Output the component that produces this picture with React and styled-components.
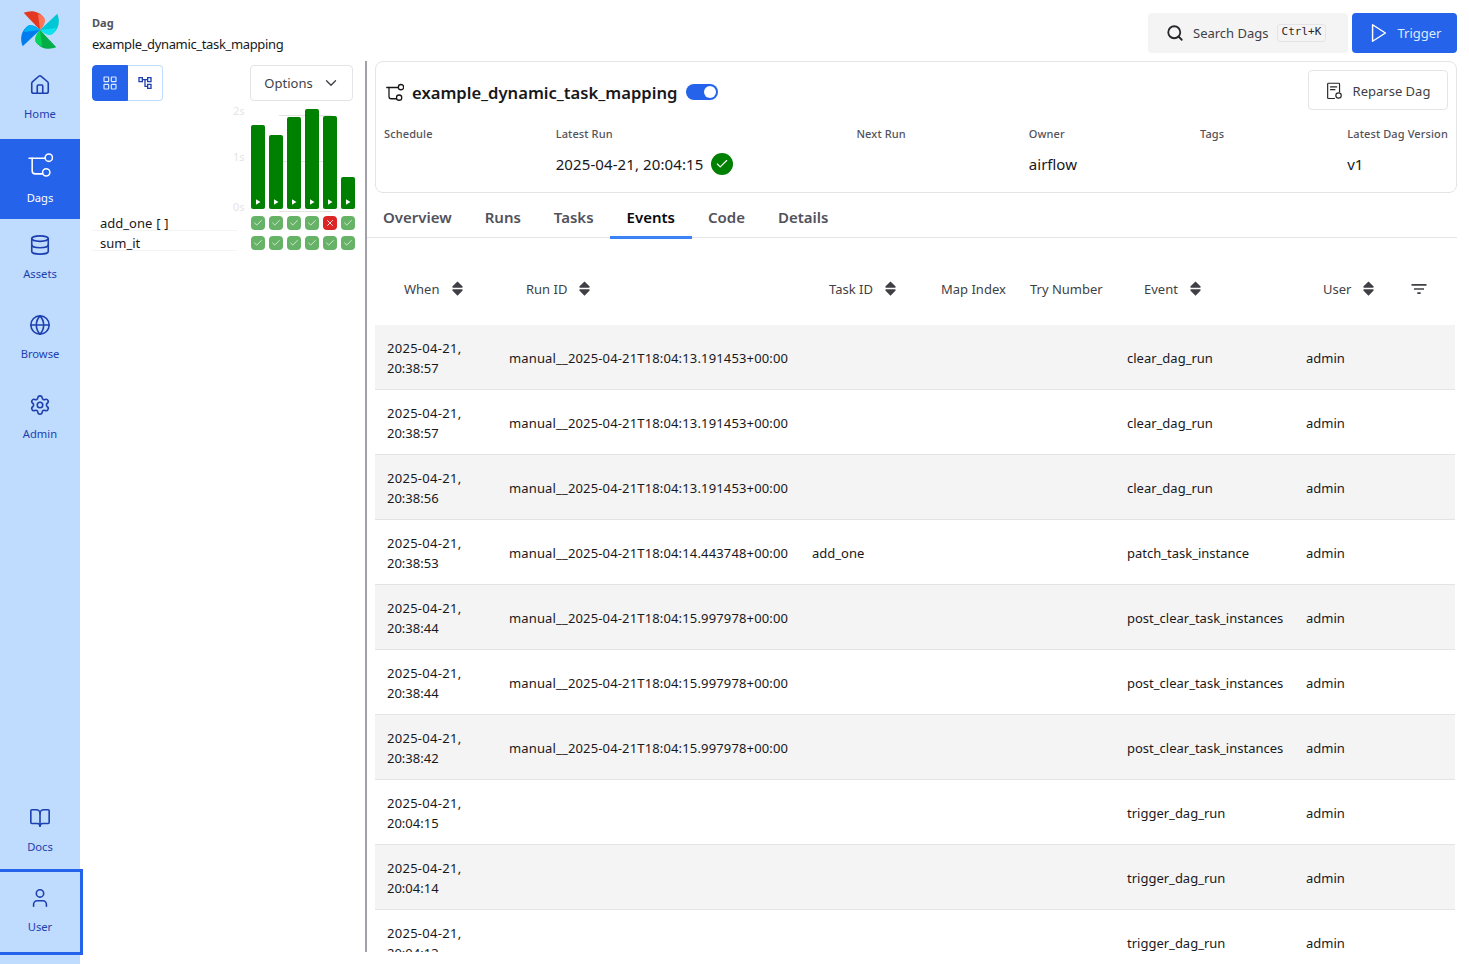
import React from "react";
import styled, { createGlobalStyle } from "styled-components";
import { House, Database, Globe, Settings, BookOpen, User, Check, X, ChevronDown, LayoutGrid, Search } from "lucide-react";
import { FiPlay } from "react-icons/fi";
import { MdOutlineAccountTree, MdFilterList } from "react-icons/md";
import { TiArrowUnsorted } from "react-icons/ti";

const GlobalStyle = createGlobalStyle`
  * { box-sizing: border-box; }
  body {
    margin: 0;
    font-family: "Noto Sans", sans-serif;
    color: #18181b;
    background: #fff;
  }
`;

const barHeights = [84, 74, 92, 100, 93, 32];
const gridRows = [
  { name: "add_one [ ]", states: ["ok", "ok", "ok", "ok", "failed", "ok"] },
  { name: "sum_it", states: ["ok", "ok", "ok", "ok", "ok", "ok"] },
];

const run1 = "manual__2025-04-21T18:04:13.191453+00:00";
const run2 = "manual__2025-04-21T18:04:14.443748+00:00";
const run3 = "manual__2025-04-21T18:04:15.997978+00:00";

const events = [
  ["20:38:57", run1, "", "clear_dag_run"],
  ["20:38:57", run1, "", "clear_dag_run"],
  ["20:38:56", run1, "", "clear_dag_run"],
  ["20:38:53", run2, "add_one", "patch_task_instance"],
  ["20:38:44", run3, "", "post_clear_task_instances"],
  ["20:38:44", run3, "", "post_clear_task_instances"],
  ["20:38:42", run3, "", "post_clear_task_instances"],
  ["20:04:15", "", "", "trigger_dag_run"],
  ["20:04:14", "", "", "trigger_dag_run"],
  ["20:04:13", "", "", "trigger_dag_run"],
];

function Logo() {
  const blade = "M72 72 L23 20 C46 11 70 15 84 36 C88 50 81 62 72 72 Z";
  const petal = "M72 72 L66 24 C76 26 82 30 86 38 C89 50 81 62 72 72 Z";
  const colors = [
    ["#e43921", "#ff7557"],
    ["#00c7d4", "#11e1ee"],
    ["#00ad46", "#04d659"],
    ["#017cee", "#00b1f5"],
  ];
  return (
    <svg width="48" height="48" viewBox="0 0 144 144">
      {colors.map(([dark, light], i) => (
        <g key={dark} transform={`rotate(${i * 90} 72 72)`}>
          <path d={blade} fill={dark} />
          <path d={petal} fill={light} />
        </g>
      ))}
    </svg>
  );
}

function DagIcon({ size = 24, strokeWidth = 2 }) {
  return (
    <svg width={size} height={size} viewBox="0 0 24 24" fill="none" stroke="currentColor" strokeWidth={strokeWidth} strokeLinecap="round">
      <path d="M1 6h15" />
      <path d="M4 6v12a3 3 0 0 0 3 3h7" />
      <circle cx="20" cy="5.5" r="3.5" fill="none" />
      <circle cx="17.5" cy="19.5" r="3.5" fill="none" />
    </svg>
  );
}

function ReparseIcon() {
  return (
    <svg width="17" height="18" viewBox="0 0 18 20" fill="none" stroke="currentColor" strokeWidth="1.3" strokeLinecap="round">
      <path d="M9 18.3H2.2a.8.8 0 0 1-.8-.8V2.2c0-.4.4-.8.8-.8h11.6c.4 0 .8.4.8.8V11" />
      <path d="M4.5 5.5h7M4.5 8.5h5" />
      <circle cx="13.5" cy="15" r="3" />
    </svg>
  );
}

export default function App() {
  return (
    <Page>
      <GlobalStyle />
      <Sidebar>
        <LogoBox>
          <Logo />
        </LogoBox>
        <NavItem><House size={22} strokeWidth={1.75} /><span>Home</span></NavItem>
        <NavItem $active><DagIcon size={25} strokeWidth={1.5} /><span>Dags</span></NavItem>
        <NavItem><Database size={22} strokeWidth={1.75} /><span>Assets</span></NavItem>
        <NavItem><Globe size={22} strokeWidth={1.75} /><span>Browse</span></NavItem>
        <NavItem><Settings size={22} strokeWidth={1.75} /><span>Admin</span></NavItem>
        <Spacer />
        <NavItem><BookOpen size={22} strokeWidth={1.75} /><span>Docs</span></NavItem>
        <NavItem $focused><User size={22} strokeWidth={1.75} /><span>User</span></NavItem>
      </Sidebar>

      <Main>
        <TopBar>
          <Crumbs>
            <CrumbLabel>Dag</CrumbLabel>
            <CrumbValue>example_dynamic_task_mapping</CrumbValue>
          </Crumbs>
          <TopActions>
            <SearchBox>
              <Search size={18} strokeWidth={2.4} />
              <span>Search Dags</span>
              <Kbd>Ctrl+K</Kbd>
            </SearchBox>
            <TriggerButton>
              <FiPlay size={22} strokeWidth={1.6} />
              Trigger
            </TriggerButton>
          </TopActions>
        </TopBar>

        <Panels>
          <LeftPanel>
            <Toolbar>
              <ViewToggle>
                <ViewButton $active><LayoutGrid size={16} strokeWidth={1.8} /></ViewButton>
                <ViewButton><MdOutlineAccountTree size={16} /></ViewButton>
              </ViewToggle>
              <OptionsButton>
                Options
                <ChevronDown size={18} strokeWidth={1.8} />
              </OptionsButton>
            </Toolbar>

            <Chart>
              <GridLine $top={14} />
              <GridLine $top={60} />
              <GridLine $top={110} />
              <AxisLabel $top={2}>2s</AxisLabel>
              <AxisLabel $top={48}>1s</AxisLabel>
              <AxisLabel $top={98}>0s</AxisLabel>
              <Bars>
                {barHeights.map((h, i) => (
                  <Bar key={i} style={{ height: h }}>
                    <PlayMark />
                  </Bar>
                ))}
              </Bars>
            </Chart>

            <GridRows>
              {gridRows.map((row) => (
                <GridRow key={row.name}>
                  <RowName>{row.name}</RowName>
                  <Squares>
                    {row.states.map((s, i) => (
                      <Square key={i} $failed={s === "failed"}>
                        {s === "failed" ? <X size={10} strokeWidth={2} /> : <Check size={10} strokeWidth={2} />}
                      </Square>
                    ))}
                  </Squares>
                </GridRow>
              ))}
            </GridRows>
          </LeftPanel>

          <RightPanel>
            <DagCard>
              <CardHead>
                <CardTitle>
                  <DagIcon size={18} strokeWidth={1.7} />
                  <h1>example_dynamic_task_mapping</h1>
                  <Toggle />
                </CardTitle>
                <ReparseButton>
                  <ReparseIcon />
                  Reparse Dag
                </ReparseButton>
              </CardHead>
              <MetaRow>
                <MetaItem><MetaLabel>Schedule</MetaLabel></MetaItem>
                <MetaItem>
                  <MetaLabel>Latest Run</MetaLabel>
                  <MetaValue>
                    <RunTime>2025-04-21, 20:04:15</RunTime>
                    <StateDot><Check size={14} strokeWidth={2} /></StateDot>
                  </MetaValue>
                </MetaItem>
                <MetaItem><MetaLabel>Next Run</MetaLabel></MetaItem>
                <MetaItem>
                  <MetaLabel>Owner</MetaLabel>
                  <MetaValue>airflow</MetaValue>
                </MetaItem>
                <MetaItem><MetaLabel>Tags</MetaLabel></MetaItem>
                <MetaItem>
                  <MetaLabel>Latest Dag Version</MetaLabel>
                  <MetaValue>v1</MetaValue>
                </MetaItem>
              </MetaRow>
            </DagCard>

            <Tabs>
              {["Overview", "Runs", "Tasks", "Events", "Code", "Details"].map((t) => (
                <Tab key={t} $active={t === "Events"}>{t}</Tab>
              ))}
            </Tabs>

            <Table>
              <HeadRow>
                <HeadCell $sortable>When <TiArrowUnsorted size={19} /></HeadCell>
                <HeadCell $sortable>Run ID <TiArrowUnsorted size={19} /></HeadCell>
                <HeadCell $sortable>Task ID <TiArrowUnsorted size={19} /></HeadCell>
                <HeadCell>Map Index</HeadCell>
                <HeadCell>Try Number</HeadCell>
                <HeadCell $sortable>Event <TiArrowUnsorted size={19} /></HeadCell>
                <HeadCell $sortable>
                  User <TiArrowUnsorted size={19} />
                  <FilterButton><MdFilterList size={20} /></FilterButton>
                </HeadCell>
              </HeadRow>
              {events.map((e, i) => (
                <Row key={i} $striped={i % 2 === 0}>
                  <Cell>
                    <DateLine>2025-04-21,</DateLine>
                    <span>{e[0]}</span>
                  </Cell>
                  <Cell $numeric>{e[1]}</Cell>
                  <Cell>{e[2]}</Cell>
                  <Cell />
                  <Cell />
                  <Cell>{e[3]}</Cell>
                  <Cell>admin</Cell>
                </Row>
              ))}
            </Table>
          </RightPanel>
        </Panels>
      </Main>
    </Page>
  );
}

const Page = styled.div`
  display: flex;
  height: 100vh;
  overflow: hidden;
`;

const Sidebar = styled.nav`
  width: 80px;
  flex-shrink: 0;
  display: flex;
  flex-direction: column;
  padding-bottom: 12px;
  background-color: #bfdbfe;
`;

const LogoBox = styled.div`
  height: 59px;
  padding-top: 6px;
  display: flex;
  justify-content: center;
`;

const NavItem = styled.div`
  position: relative;
  width: 80px;
  height: 80px;
  flex-shrink: 0;
  display: flex;
  flex-direction: column;
  align-items: center;
  gap: ${(p) => (p.$active ? "13px" : "10px")};
  padding-top: ${(p) => (p.$active ? "13px" : "15px")};
  font-size: 11.2px;
  line-height: 16px;
  color: ${(p) => (p.$active ? "#fff" : "#1e40af")};
  background-color: ${(p) => (p.$active ? "#2563eb" : "transparent")};
  outline: ${(p) => (p.$focused ? "3px solid #2563eb" : "none")};
`;

const Spacer = styled.div`
  flex: 1;
`;

const Main = styled.main`
  flex: 1;
  min-width: 0;
  display: flex;
  flex-direction: column;
  padding: 0 12px 12px;
`;

const TopBar = styled.header`
  height: 61px;
  flex-shrink: 0;
  display: flex;
  justify-content: space-between;
  padding-top: 13px;
`;

const Crumbs = styled.div`
  display: flex;
  flex-direction: column;
  gap: 4px;
  padding-top: 2px;
`;

const CrumbLabel = styled.span`
  font-size: 11px;
  line-height: 16px;
  font-weight: 700;
  color: #52525b;
`;

const CrumbValue = styled.span`
  font-size: 13px;
  line-height: 18px;
  letter-spacing: -0.35px;
`;

const TopActions = styled.div`
  display: flex;
  gap: 4px;
  height: 40px;
`;

const SearchBox = styled.div`
  width: 200px;
  display: flex;
  align-items: center;
  padding-left: 18px;
  font-size: 13px;
  color: #3f3f46;
  background-color: #f4f4f5;
  border-radius: 4px;

  svg {
    color: #27272a;
    margin-right: 9px;
  }
`;

const Kbd = styled.kbd`
  margin-left: 8px;
  padding: 0 4px;
  height: 18px;
  font-family: "DejaVu Sans Mono", monospace;
  font-size: 11px;
  line-height: 13px;
  color: #27272a;
  background-color: #f4f4f5;
  border: 1px solid #e4e4e7;
  border-radius: 3px;
`;

const TriggerButton = styled.div`
  width: 105px;
  display: flex;
  align-items: center;
  justify-content: center;
  gap: 8px;
  font-size: 13px;
  color: #dbeafe;
  background-color: #2563eb;
  border-radius: 4px;

  svg {
    color: #fff;
  }
`;

const Panels = styled.div`
  flex: 1;
  min-height: 0;
  display: flex;
`;

const LeftPanel = styled.section`
  width: 273px;
  flex-shrink: 0;
  padding-top: 4px;
`;

const Toolbar = styled.div`
  display: flex;
  justify-content: space-between;
  width: 261px;
  height: 36px;
`;

const ViewToggle = styled.div`
  display: flex;
`;

const ViewButton = styled.div`
  width: ${(p) => (p.$active ? "36px" : "35px")};
  display: flex;
  align-items: center;
  justify-content: center;
  color: ${(p) => (p.$active ? "#dbeafe" : "#1e40af")};
  background-color: ${(p) => (p.$active ? "#2563eb" : "#fff")};
  border: 1px solid ${(p) => (p.$active ? "#2563eb" : "#bfdbfe")};
  border-left-width: ${(p) => (p.$active ? "1px" : "0")};
  border-radius: ${(p) => (p.$active ? "4px 0 0 4px" : "0 4px 4px 0")};
`;

const OptionsButton = styled.div`
  width: 103px;
  display: flex;
  align-items: center;
  justify-content: center;
  gap: 9px;
  padding-left: 1px;
  font-size: 13px;
  color: #3f3f46;
  border: 1px solid #e4e4e7;
  border-radius: 4px;
`;

const Chart = styled.div`
  position: relative;
  height: 108px;
  display: flex;
  justify-content: flex-end;
`;

const GridLine = styled.div`
  position: absolute;
  top: ${(p) => p.$top}px;
  left: 187px;
  width: 53px;
  height: 1px;
  background-color: #e4e4e7;
`;

const AxisLabel = styled.span`
  position: absolute;
  top: ${(p) => p.$top}px;
  left: 141px;
  font-size: 11px;
  line-height: 16px;
  color: #e4e4e7;
`;

const Bars = styled.div`
  position: relative;
  display: flex;
  align-items: flex-end;
  gap: 4px;
  width: 104px;
  margin-right: 10px;
`;

const Bar = styled.div`
  width: 14px;
  display: flex;
  align-items: flex-end;
  justify-content: center;
  padding-bottom: 4px;
  background-color: #008000;
  border-radius: 2px;
`;

const PlayMark = styled.i`
  width: 5px;
  height: 6px;
  background-color: #fff;
  clip-path: polygon(0 0, 100% 50%, 0 100%);
`;

const GridRows = styled.div`
  display: flex;
  flex-direction: column;
  gap: 6px;
  margin-top: 7px;
`;

const GridRow = styled.div`
  display: flex;
  height: 14px;
  gap: 14px;
`;

const RowName = styled.div`
  width: 145px;
  height: 15px;
  padding-left: 8px;
  font-size: 13px;
  line-height: 15px;
  word-spacing: 0.5px;
  border-bottom: 1px solid #f4f4f5;
`;

const Squares = styled.div`
  display: flex;
  gap: 4px;
`;

const Square = styled.div`
  width: 14px;
  height: 14px;
  display: flex;
  align-items: center;
  justify-content: center;
  color: ${(p) => (p.$failed ? "#fff" : "#e6f3e6")};
  background-color: ${(p) => (p.$failed ? "#dc2626" : "#66b266")};
  border-radius: 4px;
`;

const RightPanel = styled.section`
  flex: 1;
  min-width: 0;
  display: flex;
  flex-direction: column;
  border-left: 2px solid #a1a1aa;
`;

const DagCard = styled.div`
  margin-left: 8px;
  height: 132px;
  flex-shrink: 0;
  padding: 8px;
  border: 1px solid #e4e4e7;
  border-radius: 8px;
`;

const CardHead = styled.div`
  display: flex;
  align-items: center;
  justify-content: space-between;
  height: 40px;
`;

const CardTitle = styled.div`
  display: flex;
  align-items: center;
  padding: 4px 0 0 2px;
  gap: 8px;

  h1 {
    margin: 0;
    font-size: 16.6px;
    font-weight: 600;
  }
`;

const Toggle = styled.div`
  position: relative;
  width: 32px;
  height: 16px;
  margin-left: 1px;
  background-color: #2563eb;
  border-radius: 8px;

  &::after {
    content: "";
    position: absolute;
    top: 2px;
    right: 2px;
    width: 12px;
    height: 12px;
    background-color: #fff;
    border-radius: 50%;
  }
`;

const ReparseButton = styled.div`
  width: 140px;
  height: 40px;
  display: flex;
  align-items: center;
  justify-content: center;
  gap: 10px;
  padding-top: 1px;
  font-size: 13px;
  color: #3f3f46;
  border: 1px solid #e4e4e7;
  border-radius: 4px;

  svg {
    color: #27272a;
  }
`;

const MetaRow = styled.div`
  display: flex;
  justify-content: space-between;
  margin-top: 15px;
`;

const MetaItem = styled.div`
  display: flex;
  flex-direction: column;
  gap: 10px;
`;

const MetaLabel = styled.span`
  font-size: 11px;
  line-height: 18px;
  font-weight: 500;
  letter-spacing: 0.12px;
  color: #52525b;
`;

const MetaValue = styled.span`
  display: flex;
  align-items: center;
  gap: 8px;
  height: 22px;
  font-size: 15px;
`;

const RunTime = styled.span`
  letter-spacing: 0.1px;
`;

const StateDot = styled.span`
  width: 22px;
  height: 22px;
  display: flex;
  align-items: center;
  justify-content: center;
  color: #fff;
  background-color: #008000;
  border-radius: 50%;
`;

const Tabs = styled.div`
  height: 45px;
  flex-shrink: 0;
  display: flex;
  border-bottom: 1px solid #e4e4e7;
`;

const Tab = styled.div`
  height: 46px;
  display: flex;
  align-items: center;
  padding: 5px 16.5px 0;
  font-size: 15px;
  font-weight: 600;
  color: ${(p) => (p.$active ? "#09090b" : "#52525b")};
  border-bottom: 3px solid ${(p) => (p.$active ? "#3b82f6" : "transparent")};

  &:first-child {
    padding-left: 16px;
  }
`;

const Table = styled.div`
  flex: 1;
  min-height: 0;
  margin-top: 15px;
  margin-left: 8px;
  width: 1080px;
  overflow: hidden;
  font-size: 13px;
  line-height: 20px;
`;

const columns = "122px 303px 129px 89px 97px 179px 161px";

const HeadRow = styled.div`
  display: grid;
  grid-template-columns: ${columns};
  height: 72px;
`;

const HeadCell = styled.div`
  display: flex;
  align-items: center;
  gap: 8px;
  padding-left: ${(p) => (p.$sortable ? "29px" : "12px")};
  padding-bottom: 1px;
  color: #3f3f46;

  svg {
    color: #3f3f46;
  }
`;

const FilterButton = styled.span`
  display: flex;
  margin-left: auto;
  margin-right: 26px;
`;

const Row = styled.div`
  display: grid;
  grid-template-columns: ${columns};
  height: 65px;
  background-color: ${(p) => (p.$striped ? "#f4f4f5" : "#fff")};
  border-bottom: 1px solid #e4e4e7;
`;

const Cell = styled.div`
  display: flex;
  flex-direction: column;
  justify-content: center;
  padding: 2px 0 0 12px;
  white-space: nowrap;
  letter-spacing: ${(p) => (p.$numeric ? "0.15px" : "0")};
`;

const DateLine = styled.span`
  letter-spacing: 0.28px;
`;
